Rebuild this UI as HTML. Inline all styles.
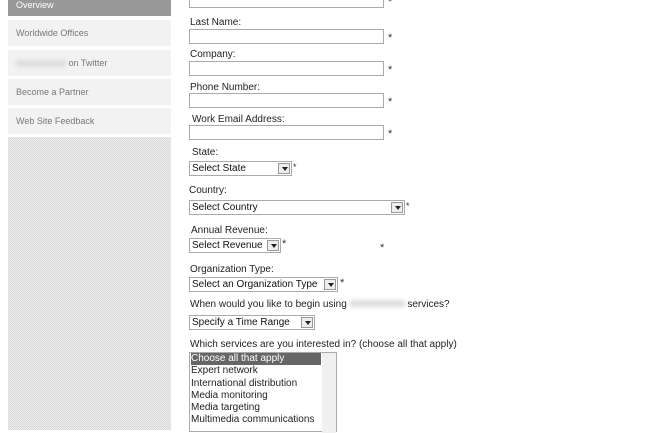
<!DOCTYPE html><html><head><style>
body{margin:0;width:671px;height:430px;overflow:hidden;background:#fff;font-family:"Liberation Sans",Arial,sans-serif;font-size:10px;color:#222;position:relative}
.a{position:absolute}
.nav{left:8px;width:163px;background:#f2f2f2;color:#777;font-size:9px;padding-left:8px;box-sizing:border-box}
.in{position:absolute;left:189px;width:195px;height:15px;border:1px solid #aaa;box-sizing:border-box;background:#fff}
.st{position:absolute;font-size:11px;color:#333}
.sel{position:absolute;left:189px;height:15px;border:1px solid #aaa;box-sizing:border-box;background:#fff;font-size:10px;line-height:13px;padding-left:2px;color:#111}
.sel i{position:absolute;right:1px;top:1px;width:12px;height:11px;border:1px solid #999;background:#eee;box-sizing:border-box}
.sel i:after{content:"";position:absolute;left:3px;top:3px;border:3px solid transparent;border-top:4px solid #222;border-bottom:0}
.lb{position:absolute;left:190px;font-size:10px;color:#222}
</style></head><body>
<div class="a" style="left:8px;top:0;width:163px;height:16px;background:#999;color:#fff;font-size:9px;padding-left:8px;box-sizing:border-box;line-height:10px">Overview</div>
<div class="a nav" style="top:20px;height:26px;line-height:26px">Worldwide Offices</div>
<div class="a nav" style="top:50px;height:26px;line-height:26px"><span style="display:inline-block;width:50px;height:7px;background:#ddd;filter:blur(2px);vertical-align:middle"></span> on Twitter</div>
<div class="a nav" style="top:79px;height:26px;line-height:26px">Become a Partner</div>
<div class="a nav" style="top:108px;height:26px;line-height:26px">Web Site Feedback</div>
<div class="a" style="left:8px;top:137px;width:163px;height:293px;background:repeating-conic-gradient(#dadada 0 25%,#ececec 0 50%) 0 0/2px 2px"></div>

<div class="in" style="top:-7px"></div><div class="st" style="left:388px;top:-4px">*</div>
<div class="lb" style="top:17px">Last Name:</div><div class="in" style="top:29px"></div><div class="st" style="left:388px;top:32px">*</div>
<div class="lb" style="top:49px">Company:</div><div class="in" style="top:61px"></div><div class="st" style="left:388px;top:64px">*</div>
<div class="lb" style="top:82px">Phone Number:</div><div class="in" style="top:93px"></div><div class="st" style="left:388px;top:96px">*</div>
<div class="lb" style="left:192px;top:114px">Work Email Address:</div><div class="in" style="top:125px"></div><div class="st" style="left:388px;top:128px">*</div>
<div class="lb" style="left:192px;top:147px">State:</div>
<div class="sel" style="top:161px;width:103px">Select State<i></i></div><div class="st" style="left:293px;top:162px;font-size:9px">*</div>
<div class="lb" style="left:189px;top:185px">Country:</div>
<div class="sel" style="top:200px;width:216px">Select Country<i></i></div><div class="st" style="left:406px;top:201px;font-size:9px">*</div>
<div class="lb" style="left:191px;top:225px">Annual Revenue:</div>
<div class="sel" style="top:238px;width:92px">Select Revenue<i></i></div><div class="st" style="left:282px;top:238px">*</div><div class="st" style="left:380px;top:242px">*</div>
<div class="lb" style="top:264px">Organization Type:</div>
<div class="sel" style="top:277px;width:149px">Select an Organization Type<i></i></div><div class="st" style="left:340px;top:277px">*</div>
<div class="lb" style="top:299px">When would you like to begin using <span style="display:inline-block;width:55px;height:7px;background:#ddd;filter:blur(2px)"></span> services?</div>
<div class="sel" style="top:315px;width:126px">Specify a Time Range<i></i></div>
<div class="lb" style="top:339px">Which services are you interested in? (choose all that apply)</div>
<div class="a" style="left:189px;top:352px;width:148px;height:80px;border:1px solid #aaa;box-sizing:border-box;font-size:10px;line-height:12.3px;padding-left:1px">
<div style="background:#666;color:#fff;width:130px">Choose all that apply</div>
<div>Expert network</div><div>International distribution</div><div>Media monitoring</div><div>Media targeting</div><div>Multimedia communications</div>
<div class="a" style="right:0;top:0;width:14px;height:80px;background:#f0f0f0"></div></div>
</body></html>
